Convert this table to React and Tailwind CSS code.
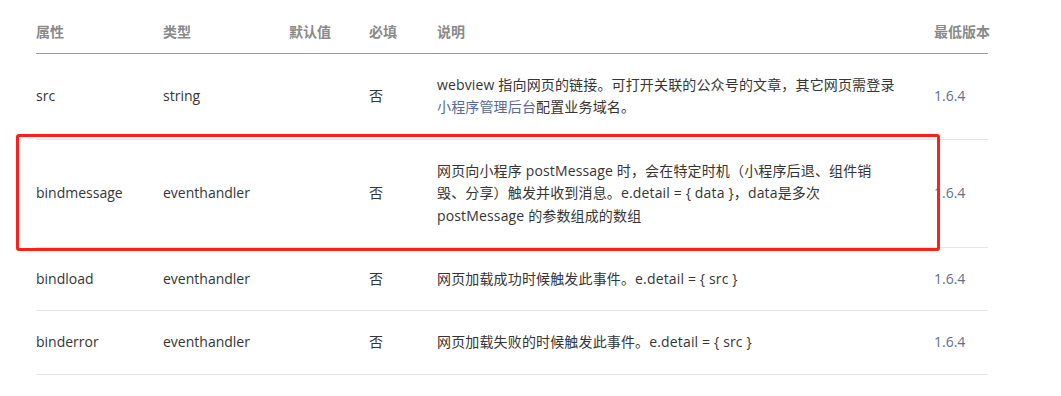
import React from 'react';

const ROWS = [
    {
        name: 'src',
        type: 'string',
        required: '否',
        desc: (
            <>
                webview 指向网页的链接。可打开关联的公众号的文章，其它网页需登录<br />
                <span className="text-[#576b95]">小程序管理后台</span>配置业务域名。
            </>
        ),
        version: '1.6.4',
    },
    {
        name: 'bindmessage',
        type: 'eventhandler',
        required: '否',
        desc: (
            <>
                网页向小程序 postMessage 时，会在特定时机（小程序后退、组件销<br />
                毁、分享）触发并收到消息。e.detail = {'{ data }'}，data是多次<br />
                postMessage 的参数组成的数组
            </>
        ),
        version: '1.6.4',
    },
    {
        name: 'bindload',
        type: 'eventhandler',
        required: '否',
        desc: '网页加载成功时候触发此事件。e.detail = { src }',
        version: '1.6.4',
    },
    {
        name: 'binderror',
        type: 'eventhandler',
        required: '否',
        desc: '网页加载失败的时候触发此事件。e.detail = { src }',
        version: '1.6.4',
    },
];

const HEADERS = ['属性', '类型', '默认值', '必填', '说明', '最低版本'];

export default function App() {
    return (
        <div className="relative w-[1061px] h-[396px] bg-white overflow-hidden font-['Open_Sans','Noto_Sans_CJK_SC',sans-serif] text-[14px] leading-[1.6] text-[#353535]">
            <table className="ml-[36px] w-[952px] table-fixed border-collapse">
                <colgroup>
                    <col className="w-[127px]" />
                    <col className="w-[126px]" />
                    <col className="w-[80px]" />
                    <col className="w-[68px]" />
                    <col className="w-[497px]" />
                    <col className="w-[54px]" />
                </colgroup>
                <thead>
                    <tr>
                        {HEADERS.map(h => (
                            <th key={h} className="pt-[21px] pb-[9.6px] text-left font-bold text-[#8a8a8a] whitespace-nowrap border-b border-[#9a9a9a]">
                                {h}
                            </th>
                        ))}
                    </tr>
                </thead>
                <tbody>
                    {ROWS.map(r => (
                        <tr key={r.name}>
                            <td className="py-5 align-middle border-b border-[#e5e5e5]">{r.name}</td>
                            <td className="py-5 align-middle border-b border-[#e5e5e5]">{r.type}</td>
                            <td className="py-5 align-middle border-b border-[#e5e5e5]"></td>
                            <td className="py-5 align-middle border-b border-[#e5e5e5]">{r.required}</td>
                            <td className="py-5 pr-[20px] align-middle border-b border-[#e5e5e5] tracking-[0.15px]">{r.desc}</td>
                            <td className="py-5 align-middle border-b border-[#e5e5e5] text-[#5f6f8f] whitespace-nowrap">{r.version}</td>
                        </tr>
                    ))}
                </tbody>
            </table>

            {/* annotation box drawn over the bindmessage row */}
            <div className="absolute left-[16px] top-[134px] w-[924px] h-[117px] border-[3px] border-[#ff1f1a] rounded-[3px] pointer-events-none" />
        </div>
    );
}
